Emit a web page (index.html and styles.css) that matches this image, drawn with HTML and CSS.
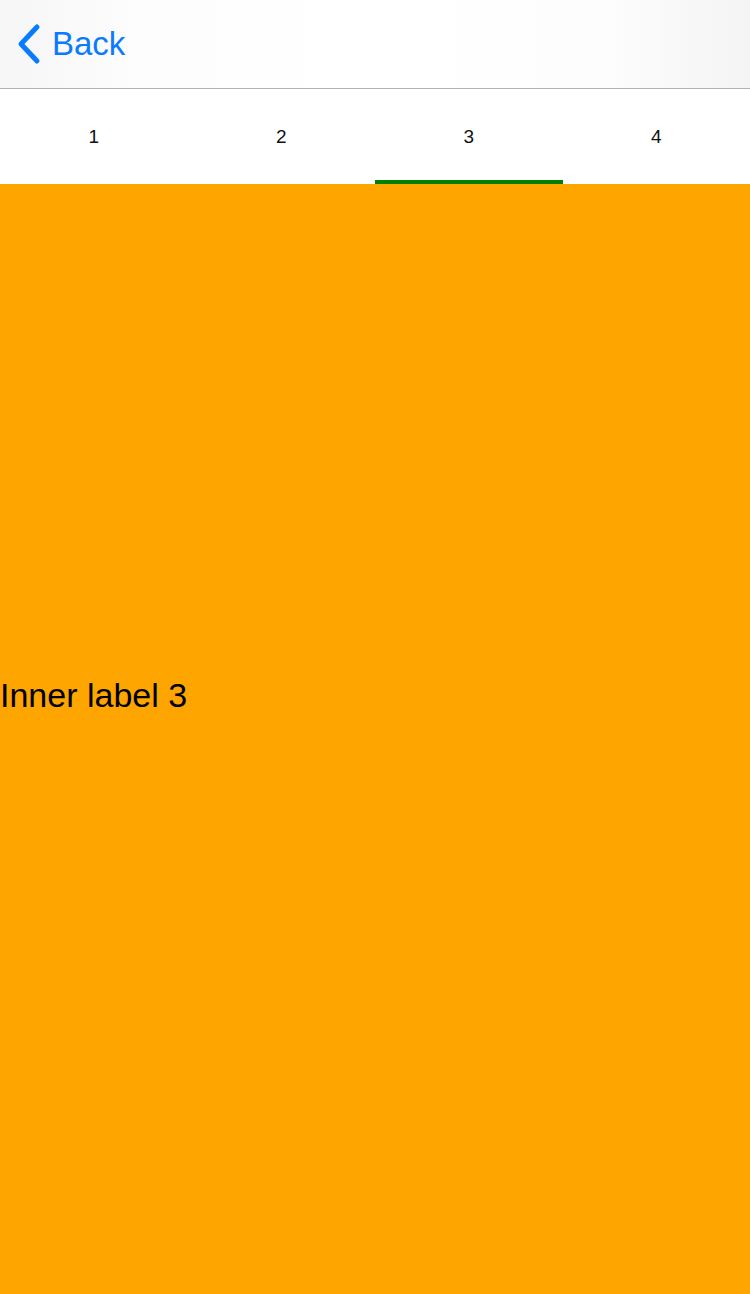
FILE: index.html
```html
<!DOCTYPE html>
<html>
<head>
<meta charset="utf-8">
<link rel="stylesheet" href="styles.css">
</head>
<body>
<div class="app">
  <header class="navbar">
    <div class="back">
      <svg class="chevron" width="26" height="42" viewBox="0 0 26 42">
        <path d="M21 4 L5 21 L21 38" fill="none" stroke="#0a7aff" stroke-width="5" stroke-linecap="round" stroke-linejoin="round"/>
      </svg>
      <span class="back-text">Back</span>
    </div>
  </header>
  <nav class="tabs">
    <div class="tab">1</div>
    <div class="tab">2</div>
    <div class="tab active">3</div>
    <div class="tab">4</div>
  </nav>
  <main class="content">
    <div class="label">Inner label 3</div>
  </main>
</div>
</body>
</html>
```
FILE: styles.css
```css
html, body {
  margin: 0;
  padding: 0;
}
body {
  font-family: "Liberation Sans", Arial, sans-serif;
  width: 750px;
  height: 1294px;
  overflow: hidden;
}
.app {
  display: flex;
  flex-direction: column;
  height: 1294px;
}
.navbar {
  height: 89px;
  box-sizing: border-box;
  border-bottom: 1px solid #b2b2b2;
  background: linear-gradient(90deg, #f6f6f6 0%, #fdfdfd 20%, #ffffff 50%, #fdfdfd 80%, #f4f4f4 100%);
  display: flex;
  align-items: center;
  flex-shrink: 0;
}
.back {
  display: flex;
  align-items: center;
  padding-left: 16px;
  gap: 10px;
}
.chevron {
  display: block;
}
.back-text {
  color: #0a7aff;
  font-size: 33px;
  line-height: 40px;
}
.tabs {
  height: 95px;
  display: flex;
  background: #ffffff;
  flex-shrink: 0;
}
.tab {
  flex: 1;
  display: flex;
  align-items: center;
  justify-content: center;
  font-size: 19px;
  color: #111;
  box-sizing: border-box;
  border-bottom: 4px solid transparent;
  padding-top: 4px;
}
.tab.active {
  border-bottom-color: #008000;
}
.content {
  flex: 1;
  background: #ffa500;
  padding-top: 490px;
}
.label {
  font-size: 34px;
  color: #000;
  line-height: 42px;
}
```
